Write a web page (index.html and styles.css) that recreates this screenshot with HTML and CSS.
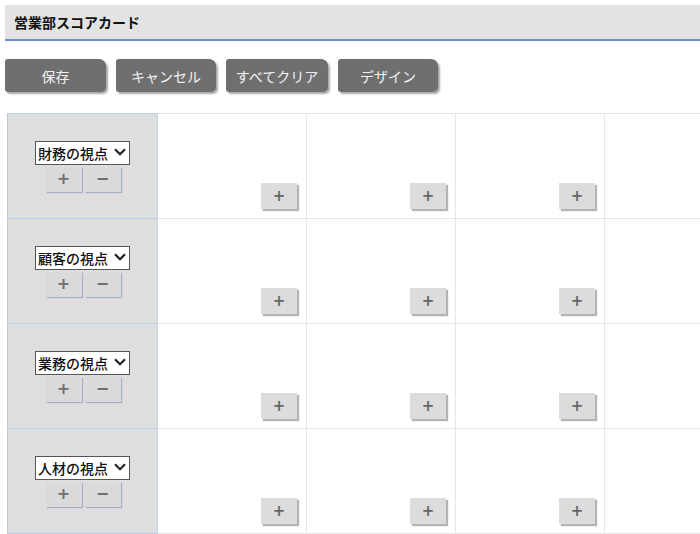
FILE: index.html
```html
<!DOCTYPE html>
<html lang="ja">
<head>
<meta charset="utf-8">
<title>営業部スコアカード</title>
<link rel="stylesheet" href="styles.css">
</head>
<body>
<div class="page">
  <header class="title-bar"><h1 class="title">営業部スコアカード</h1></header>
  <nav class="toolbar">
    <button class="tb-btn w101">保存</button>
    <button class="tb-btn w100">キャンセル</button>
    <button class="tb-btn w102">すべてクリア</button>
    <button class="tb-btn w100">デザイン</button>
  </nav>
  <div class="grid">
    <div class="row">
      <div class="head-cell">
        <div class="sel-wrap">
          <select class="sel"><option>財務の視点</option><option>顧客の視点</option><option>業務の視点</option><option>人材の視点</option></select>
          <svg class="chev" width="12" height="8" viewBox="0 0 12 8"><path d="M1 1.2 L6 6.2 L11 1.2" fill="none" stroke="#222" stroke-width="2.2"/></svg>
        </div>
        <div class="pm"><button class="sm-btn">+</button><button class="sm-btn">−</button></div>
      </div>
      <div class="cell"><button class="add-btn">+</button></div>
      <div class="cell"><button class="add-btn">+</button></div>
      <div class="cell"><button class="add-btn">+</button></div>
      <div class="cell last"></div>
    </div>
    <div class="row">
      <div class="head-cell">
        <div class="sel-wrap">
          <select class="sel"><option>顧客の視点</option><option>財務の視点</option><option>業務の視点</option><option>人材の視点</option></select>
          <svg class="chev" width="12" height="8" viewBox="0 0 12 8"><path d="M1 1.2 L6 6.2 L11 1.2" fill="none" stroke="#222" stroke-width="2.2"/></svg>
        </div>
        <div class="pm"><button class="sm-btn">+</button><button class="sm-btn">−</button></div>
      </div>
      <div class="cell"><button class="add-btn">+</button></div>
      <div class="cell"><button class="add-btn">+</button></div>
      <div class="cell"><button class="add-btn">+</button></div>
      <div class="cell last"></div>
    </div>
    <div class="row">
      <div class="head-cell">
        <div class="sel-wrap">
          <select class="sel"><option>業務の視点</option><option>財務の視点</option><option>顧客の視点</option><option>人材の視点</option></select>
          <svg class="chev" width="12" height="8" viewBox="0 0 12 8"><path d="M1 1.2 L6 6.2 L11 1.2" fill="none" stroke="#222" stroke-width="2.2"/></svg>
        </div>
        <div class="pm"><button class="sm-btn">+</button><button class="sm-btn">−</button></div>
      </div>
      <div class="cell"><button class="add-btn">+</button></div>
      <div class="cell"><button class="add-btn">+</button></div>
      <div class="cell"><button class="add-btn">+</button></div>
      <div class="cell last"></div>
    </div>
    <div class="row">
      <div class="head-cell">
        <div class="sel-wrap">
          <select class="sel"><option>人材の視点</option><option>財務の視点</option><option>顧客の視点</option><option>業務の視点</option></select>
          <svg class="chev" width="12" height="8" viewBox="0 0 12 8"><path d="M1 1.2 L6 6.2 L11 1.2" fill="none" stroke="#222" stroke-width="2.2"/></svg>
        </div>
        <div class="pm"><button class="sm-btn">+</button><button class="sm-btn">−</button></div>
      </div>
      <div class="cell"><button class="add-btn">+</button></div>
      <div class="cell"><button class="add-btn">+</button></div>
      <div class="cell"><button class="add-btn">+</button></div>
      <div class="cell last"></div>
    </div>
  </div>
</div>
</body>
</html>
```

FILE: styles.css
```css
html, body {
  margin: 0;
  padding: 0;
  overflow: hidden;
  background: #ffffff;
}
body {
  font-family: "Noto Sans CJK JP", "Noto Sans", sans-serif;
  color: #111;
}
.page {
  padding: 5px 0 0 5px;
}
.title-bar {
  height: 34px;
  background: #e3e3e3;
  border-bottom: 2px solid #6d8fc9;
  display: flex;
  align-items: center;
  padding-left: 9px;
}
.title {
  margin: 0;
  font-size: 14px;
  font-weight: bold;
  color: #111;
  line-height: 1;
}
.toolbar {
  display: flex;
  gap: 10px;
  margin-top: 18px;
}
.tb-btn {
  height: 33px;
  border: none;
  background: #6f6f6f;
  color: #f3f3f3;
  font-family: inherit;
  font-size: 14px;
  border-radius: 3px 7px 5px 3px;
  box-shadow: 2px 2px 2px #a8a8a8;
  padding: 0;
  line-height: 1;
}
.w100 { width: 100px; }
.w101 { width: 101px; }
.w102 { width: 102px; }
.grid {
  margin-top: 21px;
  margin-left: 2px;
  border-top: 1px solid #e6e6e6;
  display: flex;
  flex-direction: column;
}
.row {
  display: flex;
  height: 105px;
}
.head-cell {
  width: 151px;
  flex: none;
  box-sizing: border-box;
  background: #dedede;
  border-left: 1px solid #c8c8c8;
  border-right: 1px solid #c2d3ec;
  border-bottom: 1px solid #b9cff0;
  display: flex;
  flex-direction: column;
  align-items: center;
  justify-content: center;
  gap: 3px;
  padding-bottom: 1px;
}
.row:first-child .head-cell {
  margin-top: -1px;
  height: 106px;
  border-top: 1px solid #c2d3ec;
}
.sel-wrap {
  position: relative;
  width: 95px;
  height: 24px;
}
.sel {
  appearance: none;
  -webkit-appearance: none;
  width: 95px;
  height: 24px;
  box-sizing: border-box;
  border: 1px solid #555;
  border-radius: 0;
  background: #fff;
  font-family: inherit;
  font-size: 14px;
  font-weight: 500;
  color: #111;
  padding: 0 0 0 2px;
  margin: 0;
  line-height: 22px;
}
.chev {
  position: absolute;
  right: 4px;
  top: 8px;
  pointer-events: none;
}
.pm {
  display: flex;
  gap: 3px;
  margin-left: 1px;
}
.sm-btn {
  width: 36px;
  height: 25px;
  border: none;
  background: #dadada;
  color: #6f6f6f;
  font-family: "DejaVu Sans", sans-serif;
  font-weight: bold;
  font-size: 16px;
  line-height: 1;
  padding: 0;
  box-shadow: 1px 1px 1px #a3b0c6;
}
.cell {
  width: 149px;
  flex: none;
  box-sizing: border-box;
  border-right: 1px solid #e6e6e6;
  border-bottom: 1px solid #e6e6e6;
  display: flex;
  align-items: flex-end;
  justify-content: flex-end;
  padding: 0 9px 9px 0;
}
.cell.last {
  flex: 1;
  border-right: none;
}
.add-btn {
  width: 36px;
  height: 26px;
  border: none;
  background: #dcdcdc;
  color: #666;
  font-family: "DejaVu Sans", sans-serif;
  font-weight: bold;
  font-size: 15px;
  line-height: 1;
  padding: 0;
  box-shadow: 2px 2px 1px #b4b4b4;
}
```
